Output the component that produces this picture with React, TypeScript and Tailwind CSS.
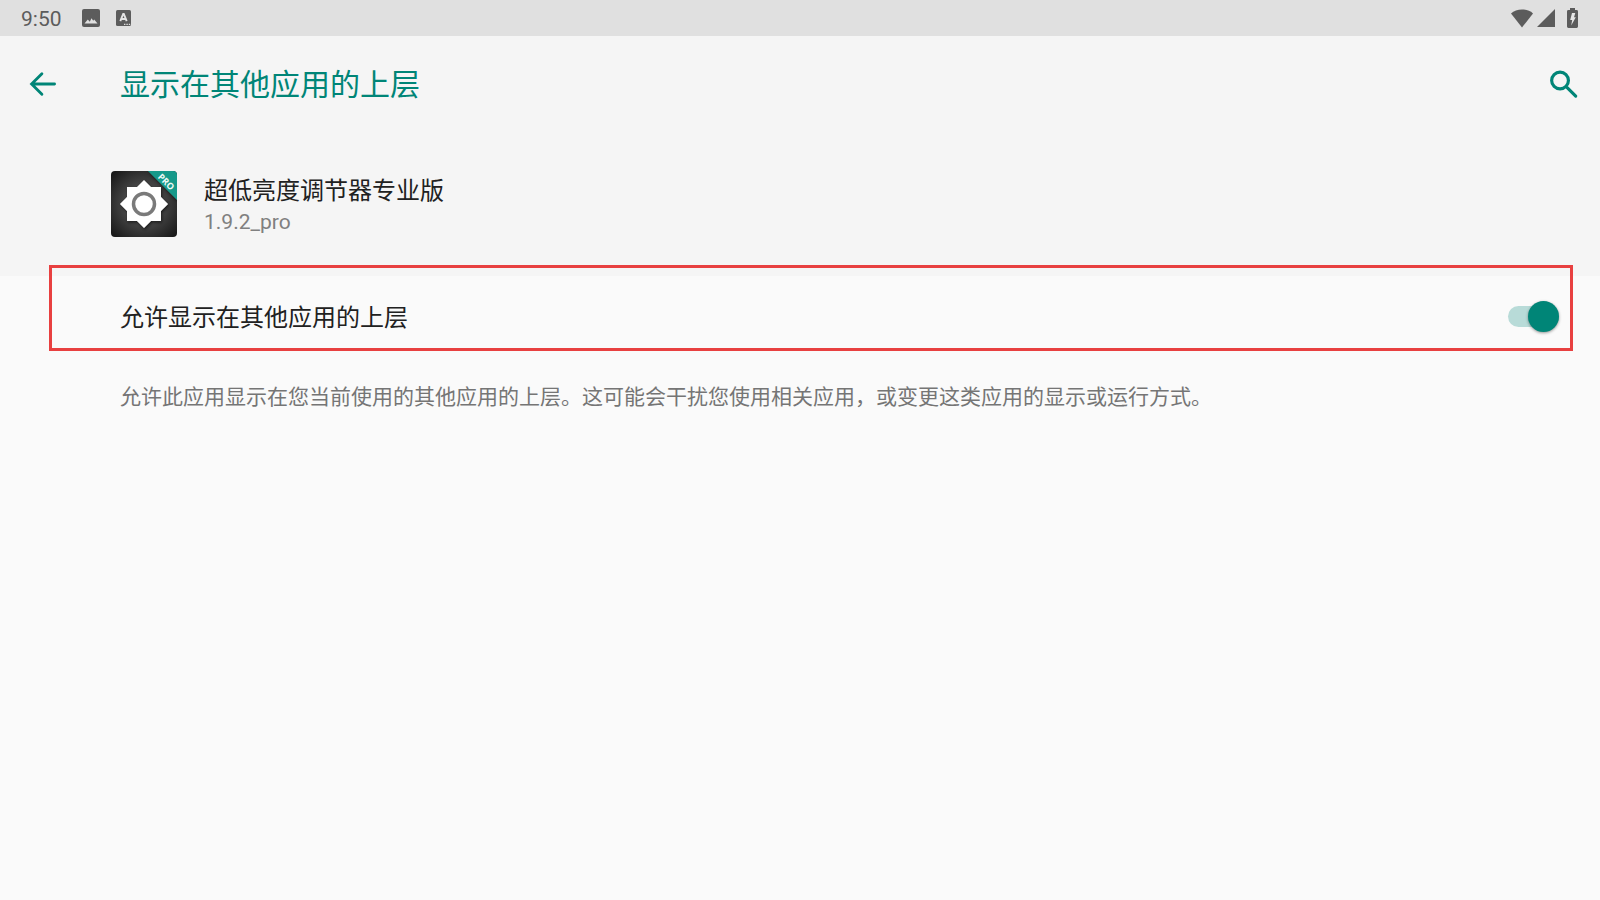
import { useState } from "react"

const app = {
  name: "超低亮度调节器专业版",
  version: "1.9.2_pro",
}

function StatusBar() {
  return (
    <div className="h-9 pl-[21px] pr-4 flex items-center justify-between bg-[#e0e0e0] text-[#5c5c5c]">
      <div className="flex items-center">
        <time className="pt-0.5 text-[21px] leading-8">9:50</time>
        <svg viewBox="0 0 18 18" className="w-[18px] h-[18px] ml-5" aria-hidden="true">
          <rect width="18" height="18" rx="2" fill="currentColor" />
          <path d="M2.500 14.500L5.800 10.500l2 2.300 1.700-3.600 1.700 2.600 1-1.300 3.300 4z" fill="#e0e0e0" />
        </svg>
        <svg viewBox="0 0 15 16" className="w-[15px] h-4 ml-4" aria-hidden="true">
          <rect width="15" height="16" rx="1.5" fill="currentColor" />
          <path d="M4.3 11.2L7.2 4h.6l2.9 7.2M5.4 9h4.2" fill="none" stroke="#e4e4e4" strokeWidth="1.9" />
          <path d="M8 14.3h1.4M10.4 14.3h1.4M12.8 14.3h1.4" stroke="#dfdfdf" strokeWidth="1.2" />
        </svg>
      </div>
      <div className="flex items-center">
        <svg viewBox="0 0 22 19" className="w-[22px] h-[19px]" fill="currentColor" aria-hidden="true">
          <path d="M11 18.5L0 4.4C2.8 1.9 6.7.5 11 .5s8.200 1.400 11 3.900z" />
        </svg>
        <svg viewBox="0 0 18 18" className="w-[18px] h-[18px] ml-1" fill="currentColor" aria-hidden="true">
          <path d="M0 18L18 0v18z" />
        </svg>
        <svg viewBox="0 0 11 20" className="w-[11px] h-5 ml-3 mr-[6px]" aria-hidden="true">
          <path
            d="M3 0h5v2h1.600Q11 2 11 3.400v15.200Q11 20 9.600 20H1.400Q0 20 0 18.600V3.400Q0 2 1.400 2H3z"
            fill="currentColor"
          />
          <path d="M5 5h3.300L7 9.200h1.800L4.200 17.500l1-5.600H3.200z" fill="#e6e6e6" />
        </svg>
      </div>
    </div>
  )
}

function AppIcon() {
  return (
    <svg viewBox="0 0 66 66" className="w-[66px] h-[66px] shrink-0" role="img" aria-label={app.name}>
      <defs>
        <radialGradient id="plate" cx="0.5" cy="0.5" r="0.7">
          <stop offset="0.3" stopColor="#505050" />
          <stop offset="1" stopColor="#151515" />
        </radialGradient>
        <clipPath id="plateClip">
          <rect width="66" height="66" rx="4" />
        </clipPath>
        <filter id="soft" x="-30%" y="-30%" width="160%" height="160%">
          <feDropShadow dx="1" dy="1.500" stdDeviation="1.500" floodOpacity="0.6" />
        </filter>
      </defs>
      <g clipPath="url(#plateClip)">
        <rect width="66" height="66" fill="url(#plate)" />
        <path d="M37 0L66 29V0z" fill="#16998a" filter="url(#soft)" />
        <text
          x="55"
          y="14"
          transform="rotate(45 55 11)"
          textAnchor="middle"
          fontSize="9"
          fontWeight="700"
          fill="#eef9f7"
          fontFamily="'Open Sans', sans-serif"
        >
          PRO
        </text>
      </g>
      <g filter="url(#soft)">
        <rect x="16" y="16" width="34" height="34" fill="#fff" />
        <rect x="16" y="16" width="34" height="34" fill="#fff" transform="rotate(45 33 33)" />
      </g>
      <circle cx="33" cy="33" r="10.500" fill="#fff" stroke="#7a7a7a" strokeWidth="3.500" />
    </svg>
  )
}

function Header() {
  return (
    <header className="h-24 pl-6 pr-[17px] flex items-center text-[#008577]">
      <button type="button" aria-label="返回" className="shrink-0 cursor-pointer">
        <svg viewBox="0 0 24 24" className="w-[38px] h-[38px]" fill="none" stroke="currentColor" strokeWidth="1.8" strokeLinecap="round">
          <path d="M19.300 12H5M11.300 5.500L4.800 12l6.500 6.500" />
        </svg>
      </button>
      <h1 className="flex-1 ml-[58px] pt-0.5 text-[30px] leading-10">显示在其他应用的上层</h1>
      <button type="button" aria-label="搜索" className="shrink-0 cursor-pointer">
        <svg viewBox="0 0 24 24" className="w-[38px] h-[38px]" fill="none" stroke="currentColor" strokeWidth="2" strokeLinecap="round">
          <circle cx="9.500" cy="9.800" r="5.300" />
          <path d="M14 14.300l5.400 5.400" />
        </svg>
      </button>
    </header>
  )
}

export default function App() {
  const [allowed, setAllowed] = useState(true)

  return (
    <div className="min-h-screen bg-[#fafafa] font-[Roboto,'Noto_Sans_CJK_SC',sans-serif]" lang="zh-CN">
      <div className="bg-[#f5f5f5]">
        <StatusBar />
        <Header />
        <section className="h-36 pl-[111px] flex items-center gap-[27px]">
          <AppIcon />
          <div className="pt-1">
            <h2 className="text-[24px] leading-8 text-[#212121]">{app.name}</h2>
            <p className="text-[21px] leading-[30px] text-[#808080]">{app.version}</p>
          </div>
        </section>
      </div>

      <main>
        <div className="relative h-20 pl-[120px] pr-[41px] flex items-center justify-between">
          <label htmlFor="overlay" className="pt-1 text-[24px] leading-8 text-[#212121]">
            允许显示在其他应用的上层
          </label>
          <span className="relative w-[51px] h-[31px] flex items-center">
            <input
              id="overlay"
              type="checkbox"
              role="switch"
              checked={allowed}
              onChange={(e) => setAllowed(e.target.checked)}
              className="peer appearance-none w-full h-[21px] rounded-full bg-[#c4c4c4] checked:bg-[#b8dbd8] cursor-pointer"
            />
            <span className="absolute left-0 peer-checked:left-5 size-[31px] rounded-full bg-[#f1f1f1] peer-checked:bg-[#008577] shadow-[0_1px_3px_rgba(0,0,0,0.4)] pointer-events-none transition-all" />
          </span>
          {/* highlight frame, reaches up over the edge of the header */}
          <div className="absolute left-[49px] right-[27px] -top-[11px] bottom-[5px] border-3 border-[#e84040] pointer-events-none" />
        </div>
        <p className="px-[120px] pt-[25px] text-[21px] leading-8 text-[#757575]">
          允许此应用显示在您当前使用的其他应用的上层。这可能会干扰您使用相关应用，或变更这类应用的显示或运行方式。
        </p>
      </main>
    </div>
  )
}
